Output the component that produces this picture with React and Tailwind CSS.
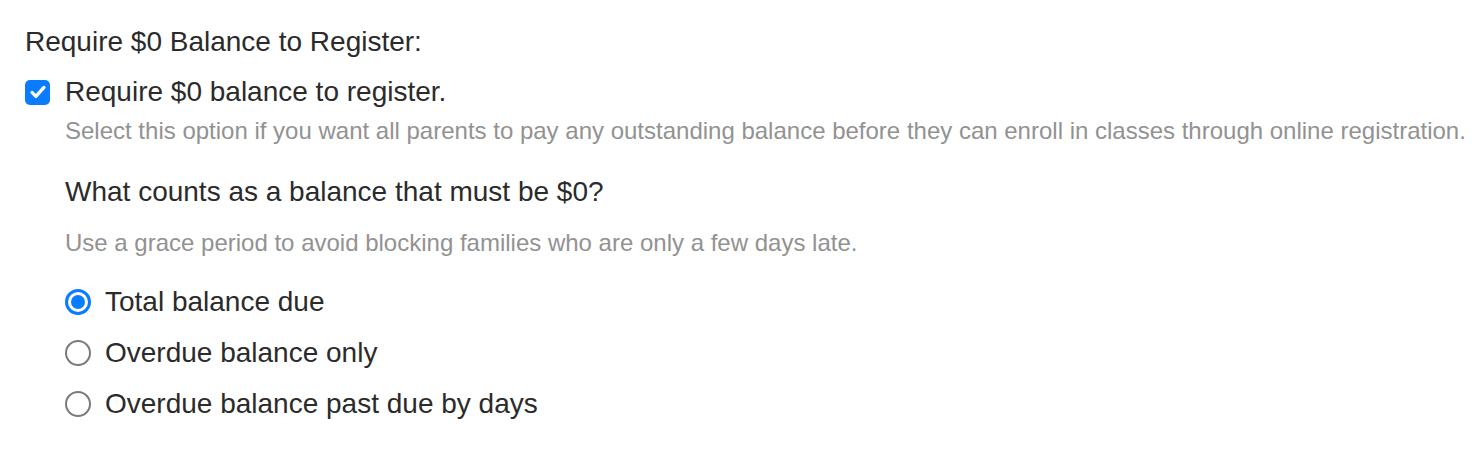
import React, { useState } from 'react';

const options = [
  { id: 'total', label: 'Total balance due' },
  { id: 'overdue', label: 'Overdue balance only' },
  { id: 'pastdue', label: 'Overdue balance past due by days' },
];

const Checkbox = ({ checked, onChange }) => (
  <button
    type="button"
    onClick={() => onChange(!checked)}
    className={`flex h-[25px] w-[25px] shrink-0 items-center justify-center rounded-[5px] ${
      checked ? 'bg-[#0a7cff]' : 'border-2 border-[#8a8a8a] bg-white'
    }`}
  >
    {checked && (
      <svg viewBox="0 0 24 24" className="h-[22px] w-[22px]" fill="none">
        <path d="M5.5 12.5l4.2 4.3L18.5 7" stroke="white" strokeWidth="3.6" strokeLinecap="round" strokeLinejoin="round" />
      </svg>
    )}
  </button>
);

const Radio = ({ checked, onClick }) => (
  <button
    type="button"
    onClick={onClick}
    className={`flex h-[26px] w-[26px] shrink-0 items-center justify-center rounded-full bg-white ${
      checked ? 'border-[3px] border-[#0a7cff]' : 'border-[2px] border-[#7a7a7a]'
    }`}
  >
    {checked && <span className="h-[14px] w-[14px] rounded-full bg-[#0a7cff]" />}
  </button>
);

export default function App() {
  const [required, setRequired] = useState(true);
  const [mode, setMode] = useState('total');

  return (
    <div className="h-[456px] w-[1480px] bg-white pl-[25px] pt-[26px] font-['Liberation_Sans',Arial,sans-serif] text-[#2b2b2b]">
      <div className="text-[28px] leading-[32px]">Require $0 Balance to Register:</div>

      <label className="mt-[18px] flex items-center gap-[15px]">
        <Checkbox checked={required} onChange={setRequired} />
        <span className="text-[28px] leading-[32px]">Require $0 balance to register.</span>
      </label>

      <div className="pl-[40px]">
        <p className="mt-[9px] whitespace-nowrap text-[24px] leading-[28px] text-[#929292]">
          Select this option if you want all parents to pay any outstanding balance before they can enroll in classes through online registration.
        </p>

        <h3 className="mt-[31px] text-[28px] leading-[32px]">What counts as a balance that must be $0?</h3>
        <p className="mt-[21px] text-[24px] leading-[28px] text-[#929292]">
          Use a grace period to avoid blocking families who are only a few days late.
        </p>

        <div className="mt-[29px] flex flex-col gap-[19px]">
          {options.map((o) => (
            <label key={o.id} className="flex items-center gap-[14px]" onClick={() => setMode(o.id)}>
              <Radio checked={mode === o.id} onClick={() => setMode(o.id)} />
              <span className="text-[28px] leading-[32px]">{o.label}</span>
            </label>
          ))}
        </div>
      </div>
    </div>
  );
}
